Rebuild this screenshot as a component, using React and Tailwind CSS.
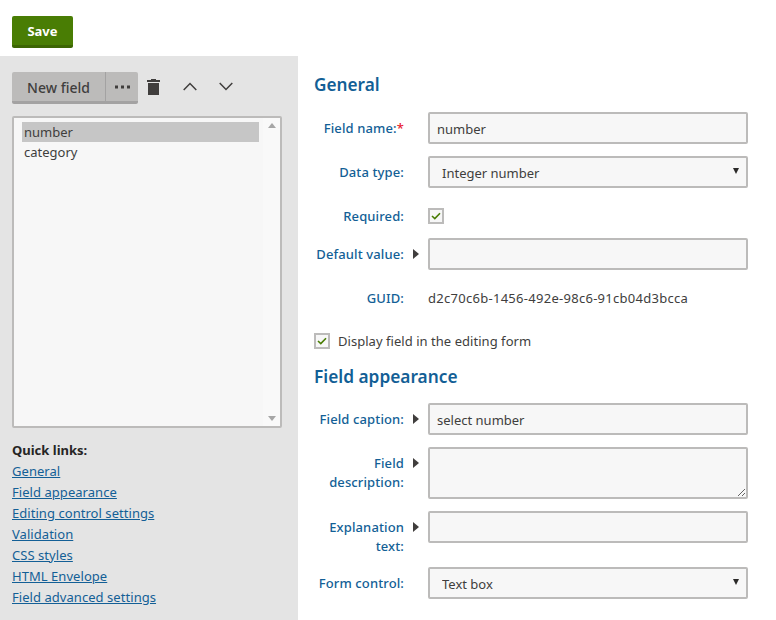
import React from "react";

const font = { fontFamily: '"Noto Sans", "Open Sans", sans-serif' };

function Arrow() {
  return (
    <svg width="6" height="10" viewBox="0 0 6 10" className="block text-[#403e3d]">
      <path d="M0 0 L6 5 L0 10 Z" fill="currentColor" />
    </svg>
  );
}

function Check() {
  return (
    <span className="flex h-4 w-4 shrink-0 items-center justify-center border-2 border-[#bcbbba] bg-[#f7f7f7]">
      <svg width="10" height="8" viewBox="0 0 10 8">
        <path d="M1 4 L3.8 6.6 L9 1.2" fill="none" stroke="#497d04" strokeWidth="1.6" />
      </svg>
    </span>
  );
}

function Row({ label, arrow, star, mt, top, labelClass = "", children }) {
  return (
    <div className={`flex ${top ? "items-start" : "items-center"} ${mt}`}>
      <div className={`w-[90px] shrink-0 text-right text-[13px] font-medium leading-[19px] tracking-[0.12px] text-[#135f96] ${labelClass}`}>
        {label}
        {star && <span className="text-[#e8212f]">*</span>}
      </div>
      <div className={`flex w-[24px] shrink-0 justify-start pl-[9px] ${top ? "pt-[11px]" : ""}`}>{arrow && <Arrow />}</div>
      <div className="w-[320px]">{children}</div>
    </div>
  );
}

const fieldClass =
  "block w-full rounded-[2px] border-2 border-[#bcbbba] bg-[#f7f7f7] text-[13px] text-[#403e3d] outline-none";

function Input({ value = "" }) {
  return <input readOnly value={value} className={`${fieldClass} h-8 px-[7px] pt-[2px]`} />;
}

function Select({ value }) {
  return (
    <div className="relative">
      <select defaultValue={value} className={`${fieldClass} h-8 appearance-none pl-3 pt-[4px]`}>
        <option>{value}</option>
      </select>
      <svg width="6" height="6" viewBox="0 0 6 6" className="absolute right-[9px] top-[12px]">
        <path d="M0 0 H6 L3 6 Z" fill="#2b2a29" />
      </svg>
    </div>
  );
}

export default function App() {
  const links = [
    "General",
    "Field appearance",
    "Editing control settings",
    "Validation",
    "CSS styles",
    "HTML Envelope",
    "Field advanced settings",
  ];
  return (
    <div style={font} className="flex h-[620px] w-[776px] flex-col overflow-hidden bg-white text-[13px] text-[#403e3d]">
      <div className="h-14 shrink-0 pl-3 pt-4">
        <button className="h-8 w-[61px] rounded-[2px] border-b-[3px] border-[#3c6503] bg-[#497d04] pt-[2px] text-[13px] font-bold text-white">
          Save
        </button>
      </div>
      <div className="flex min-h-0 flex-1">
        <aside className="w-[298px] shrink-0 bg-[#e4e4e4] pl-3 pt-4">
          <div className="flex h-8 items-center">
            <div className="flex h-8 w-[126px] rounded-[2px] border-b-[3px] border-[#a3a2a2] bg-[#bcbbba] text-[#403e3d]">
              <span className="flex w-[94px] items-center justify-center border-r border-[#a3a2a2] pt-[2px] text-[14px] font-medium">
                New field
              </span>
              <span className="flex flex-1 items-center justify-center">
                <svg width="15" height="4" viewBox="0 0 15 4">
                  <rect x="0" y="0.5" width="3" height="3" fill="#403e3d" />
                  <rect x="6" y="0.5" width="3" height="3" fill="#403e3d" />
                  <rect x="12" y="0.5" width="3" height="3" fill="#403e3d" />
                </svg>
              </span>
            </div>
            <svg width="13" height="16" viewBox="0 0 13 16" className="ml-[9px] mb-[2px]">
              <path d="M4 1 V0 H9 V1 H13 V3 H0 V1 Z M1 4 H12 V16 H1 Z" fill="#403e3d" />
            </svg>
            <svg width="14" height="9" viewBox="0 0 14 9" className="ml-[23px] mb-[3px]">
              <path d="M0.7 8 L7 1.5 L13.3 8" fill="none" stroke="#403e3d" strokeWidth="1.5" />
            </svg>
            <svg width="14" height="9" viewBox="0 0 14 9" className="ml-[22px] mb-[3px]">
              <path d="M0.7 1 L7 7.5 L13.3 1" fill="none" stroke="#403e3d" strokeWidth="1.5" />
            </svg>
          </div>
          <div className="mt-3 flex h-[312px] w-[270px] rounded-[2px] border-2 border-[#bcbbba] bg-[#f7f7f7]">
            <div className="flex-1 pl-2 pt-1 text-[13px] leading-5">
              <div className="w-[237px] bg-[#c6c6c6] pl-[2px]">number</div>
              <div className="pl-[2px]">category</div>
            </div>
            <div className="flex w-[17px] flex-col items-center justify-between bg-[#f9f9f9] py-[5px]">
              <svg width="8" height="5" viewBox="0 0 8 5"><path d="M0 5 L4 0 L8 5 Z" fill="#a6a6a6" /></svg>
              <svg width="8" height="5" viewBox="0 0 8 5"><path d="M0 0 L4 5 L8 0 Z" fill="#a6a6a6" /></svg>
            </div>
          </div>
          <div className="mt-3 text-[13px] font-bold leading-[21px] text-[#262524]">Quick links:</div>
          <ul className="text-[13px] leading-[21px] tracking-[0.05px] text-[#135f96]">
            {links.map((l) => (
              <li key={l}>
                <a className="underline" href="#">{l}</a>
              </li>
            ))}
          </ul>
        </aside>
        <main className="flex-1 pl-4 pt-[17px]">
          <h2 className="text-[17.2px] font-semibold leading-6 text-[#135f96]">General</h2>
          <Row label="Field name:" star mt="mt-[15px]"><Input value="number" /></Row>
          <Row label="Data type:" mt="mt-3"><Select value="Integer number" /></Row>
          <Row label="Required:" labelClass="!leading-4" mt="mt-5"><Check /></Row>
          <Row label="Default value:" arrow mt="mt-[14px]"><Input /></Row>
          <Row label="GUID:" mt="mt-[18px]">
            <div className="leading-[20px] tracking-[0.28px]">d2c70c6b-1456-492e-98c6-91cb04d3bcca</div>
          </Row>
          <label className="mt-[25px] flex items-center gap-2 leading-4">
            <Check />
            <span className="tracking-[0.04px]">Display field in the editing form</span>
          </label>
          <h2 className="mt-4 text-[17.3px] font-semibold leading-6 text-[#135f96]">Field appearance</h2>
          <Row label="Field caption:" arrow mt="mt-[14px]"><Input value="select number" /></Row>
          <Row label={<>Field<br />description:</>} arrow top labelClass="pt-[7px]" mt="mt-3">
            <textarea readOnly className={`${fieldClass} h-[52px] resize-y px-[7px]`} />
          </Row>
          <Row label={<>Explanation<br />text:</>} arrow top labelClass="pt-[7px]" mt="mt-3">
            <Input />
          </Row>
          <Row label="Form control:" mt="mt-[11px]"><Select value="Text box" /></Row>
        </main>
      </div>
    </div>
  );
}
